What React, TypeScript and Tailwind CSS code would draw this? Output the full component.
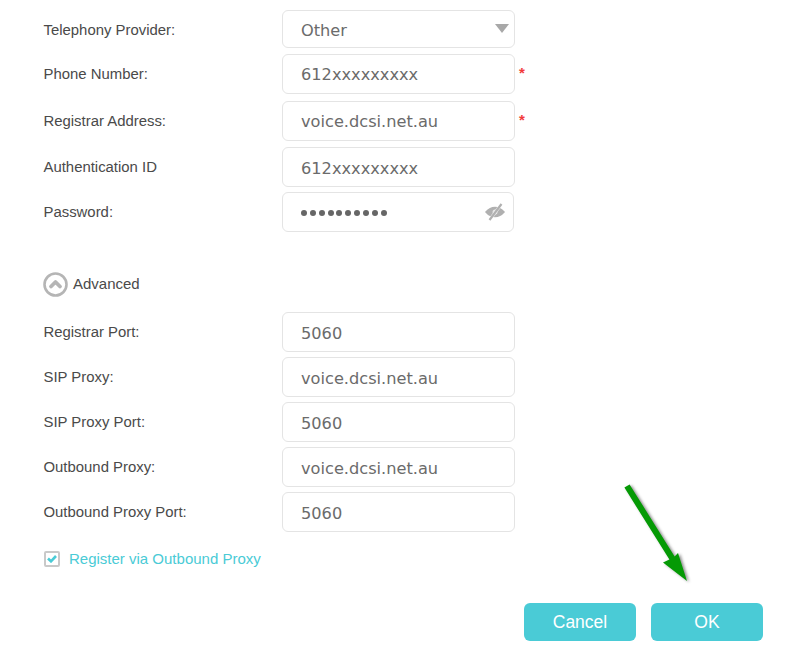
const sans = "font-['Liberation_Sans',Arial,sans-serif]";

interface FieldRowProps {
  label: string;
  value?: string;
  height?: string;
  width?: string;
  margin: string;
  required?: boolean;
  children?: React.ReactNode;
}

function FieldRow({ label, value, height = "h-10", width = "w-[233px]", margin, required, children }: FieldRowProps) {
  return (
    <div className={`flex items-start ${margin}`}>
      <div className="w-[238.500px] pt-[10px] pl-[43.500px] box-content text-[14.900px] leading-[20px] text-[#4a4a4a]">
        {label}
      </div>
      <div
        className={`relative ${width} ${height} ${required ? "pt-[2px]" : "pt-[4px]"} flex items-center pl-[18px] rounded-[6px] border border-[#e4e4e4] bg-white font-['DejaVu_Sans',sans-serif] text-[16.200px] text-[#6b6b6b]`}
      >
        {value}
        {children}
      </div>
      {required && <span className="ml-1 mt-[9px] text-[15px] font-bold leading-[20px] text-[#f23b3b]">*</span>}
    </div>
  );
}

function EyeOff() {
  return (
    <svg width="22" height="18" viewBox="0 0 22 18" className="absolute right-[7px] top-[10px]" aria-hidden="true">
      <path d="M2 9C5 5.500 8 4.500 11 4.500s6 1 9 4.500c-3 3.500-6 4.500-9 4.500S5 12.500 2 9z" fill="#b0b0b0" stroke="#b0b0b0" strokeWidth="1.500" />
      <circle cx="11" cy="9" r="2.500" fill="#ffffff" opacity="0.65" />
      <path d="M5.500 17L17.500 1" stroke="#ffffff" strokeWidth="3.200" opacity="0.7" />
      <path d="M5.500 17L17.500 1" stroke="#b0b0b0" strokeWidth="2.200" />
    </svg>
  );
}

export default function App() {
  return (
    <div className={`relative w-[793px] h-[660px] overflow-hidden bg-white pt-[10px] ${sans}`}>
      <FieldRow label="Telephony Provider:" value="Other" height="h-[38px]" margin="">
        <span className="absolute right-[5px] top-[13px] w-0 h-0 border-x-[7px] border-x-transparent border-t-[9px] border-t-[#a8a8a8]" />
      </FieldRow>
      <FieldRow label="Phone Number:" value="612xxxxxxxxx" margin="mt-[6px]" required />
      <FieldRow label="Registrar Address:" value="voice.dcsi.net.au" margin="mt-[7px]" required />
      <FieldRow label="Authentication ID" value="612xxxxxxxxx" margin="mt-[6px]" />
      <FieldRow label="Password:" width="w-[232px]" margin="mt-[5px]">
        <span className="flex gap-[2.850px] -mt-[2px]">
          {Array.from({ length: 10 }).map((_, i) => (
            <span key={i} className="w-[6px] h-[6px] rounded-full bg-[#666666]" />
          ))}
        </span>
        <EyeOff />
      </FieldRow>

      <div className="flex items-center pl-[43px] mt-[39px] h-[26px]">
        <svg width="25" height="25" viewBox="0 0 25 25" aria-hidden="true">
          <circle cx="12.500" cy="12.500" r="11" fill="none" stroke="#b5b5b5" strokeWidth="2.600" />
          <path d="M8 14.500L12.500 10l4.500 4.500" fill="none" stroke="#b5b5b5" strokeWidth="3.800" strokeLinecap="round" strokeLinejoin="round" />
        </svg>
        <span className="ml-[5px] pt-[1px] text-[15px] text-[#4a4a4a]">Advanced</span>
      </div>

      <FieldRow label="Registrar Port:" value="5060" margin="mt-[15px]" />
      <FieldRow label="SIP Proxy:" value="voice.dcsi.net.au" margin="mt-[5px]" />
      <FieldRow label="SIP Proxy Port:" value="5060" margin="mt-[5px]" />
      <FieldRow label="Outbound Proxy:" value="voice.dcsi.net.au" margin="mt-[5px]" />
      <FieldRow label="Outbound Proxy Port:" value="5060" margin="mt-[5px]" />

      <div className="flex items-center pl-[44px] mt-[17px] h-[20px]">
        <span className="flex items-center justify-center w-4 h-4 rounded-[2px] border-2 border-[#c9c9c9] bg-white">
          <svg width="10" height="8" viewBox="0 0 10 8" aria-hidden="true">
            <path d="M1 3.500l3 2.800L9 1" fill="none" stroke="#4acbd6" strokeWidth="2.600" />
          </svg>
        </span>
        <span className="ml-[9px] pt-[1px] text-[15px] text-[#4acbd6]">Register via Outbound Proxy</span>
      </div>

      <div className="flex justify-end gap-[15px] mt-[34px] pr-[30px]">
        <button className="w-[112px] h-[38px] rounded-[6px] bg-[#4acbd6] text-white text-[17.500px]">Cancel</button>
        <button className="w-[112px] h-[38px] rounded-[6px] bg-[#4acbd6] text-white text-[17.500px]">OK</button>
      </div>

      {/* annotation arrow */}
      <svg
        className="absolute left-[620px] top-[480px] drop-shadow-[2px_1px_1.500px_rgba(0,0,0,0.45)]"
        width="75"
        height="110"
        viewBox="0 0 75 110"
        aria-hidden="true"
      >
        <path d="M4.400 7.600L49.400 79.600 43 82.500 67 101 58 73 54.600 76.400 9.600 4.400z" fill="#059a05" />
      </svg>
    </div>
  );
}
